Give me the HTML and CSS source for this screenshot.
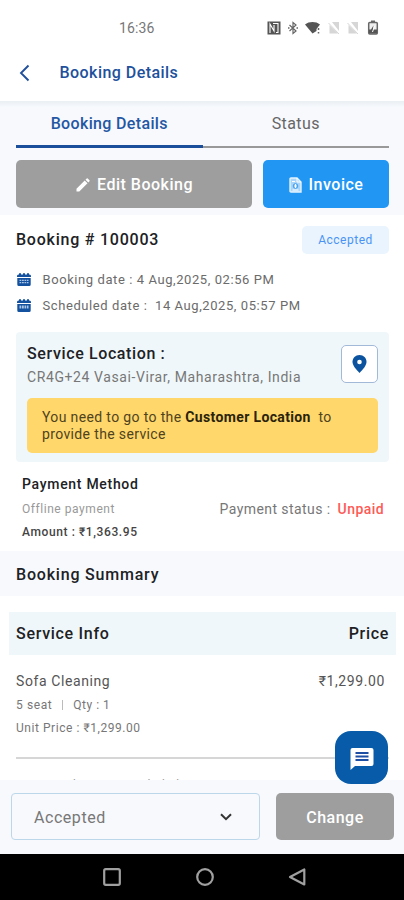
FILE: index.html
```html
<!DOCTYPE html>
<html lang="en">
<head>
<meta charset="utf-8">
<title>Booking Details</title>
<link rel="stylesheet" href="styles.css">
</head>
<body>
<div class="phone">
  <div class="statusbar">
    <span class="clock">16:36</span>
    <div class="sysicons">
      <svg width="14" height="14" viewBox="0 0 14 14"><rect x=".5" y=".5" width="13" height="13" fill="#555"/><path d="M3 12V3L7 10V4M6 2.500H11V11.500H9" fill="none" stroke="#fff" stroke-width="1.100"/></svg>
      <svg width="10" height="14" viewBox="0 0 10 14"><path d="M1.500 4L8 10 5 12.500V1.500L8 4 1.500 10" fill="none" stroke="#666" stroke-width="1.200"/><path d="M0 7h1.500M8.500 7H10" stroke="#666" stroke-width="1.300"/></svg>
      <svg width="16" height="14" viewBox="0 0 16 14"><path d="M0 3.500C4 .2 11 .2 15 3.500L11.500 8V10L7.500 12.500Z" fill="#555"/><path d="M13.500 7v2M13.500 11v1.500" stroke="#666" stroke-width="1.500"/></svg>
      <svg width="12" height="14" viewBox="0 0 12 14"><path d="M4 1H11V10ZM1.500 4V12.500H10Z" fill="#d6d6d6"/><path d="M.5 2L11 13" stroke="#d6d6d6"/></svg>
      <svg width="12" height="14" viewBox="0 0 12 14"><path d="M4 1H11V10ZM1.500 4V12.500H10Z" fill="#d6d6d6"/><path d="M.5 2L11 13" stroke="#d6d6d6"/></svg>
      <svg width="12" height="16" viewBox="0 0 12 16"><path d="M4 2V.5H8V2" fill="#666"/><rect x="1.700" y="2.500" width="8.600" height="11.500" rx="1" fill="#eee" stroke="#666" stroke-width="1.500"/><path d="M2 9.500H4L6.500 5.500 6 9.500H10V13.500H2Z" fill="#555"/><path d="M7.500 6L5.500 12" stroke="#fff"/></svg>
    </div>
  </div>
  <header class="appbar">
    <svg class="back" width="12" height="18" viewBox="0 0 12 18"><path d="M9.500 1.500L2 9l7.500 7.500" fill="none" stroke="#20509c" stroke-width="1.900"/></svg>
    <h1 class="title">Booking Details</h1>
  </header>
  <main class="content">
    <section class="top">
      <nav class="tabs">
        <span class="tab active">Booking Details</span>
        <span class="tab">Status</span>
      </nav>
      <div class="actions">
        <button class="btn gray edit">
          <svg width="14" height="14" viewBox="0 0 14 14"><path d="M.5 13.500V10.700L8.700 2.500 11.500 5.300 3.300 13.500ZM9.500 1.700L10.700.5Q11.200.1 11.700.5L13.500 2.300Q13.900 2.800 13.500 3.300L12.300 4.500Z" fill="#fff"/></svg>
          <span>Edit Booking</span>
        </button>
        <button class="btn blue">
          <svg width="13" height="16" viewBox="0 0 13 16"><path d="M2 1H8L12 5V15H2Q1 15 1 14V2Q1 1 2 1Z" fill="#a9d5fb" stroke="#e4f2ff" stroke-width="1.400"/><path d="M8 1V5H12M3 4.500H6M3.500 13H9.500" fill="none" stroke="#fff"/><circle cx="6.500" cy="9" r="2.300" fill="none" stroke="#3b9cf0"/><path d="M6.500 7V11" stroke="#fff"/></svg>
          <span>Invoice</span>
        </button>
      </div>
    </section>
    <section class="booking">
      <div class="bookhead"><h2 class="number">Booking # 100003</h2><span class="badge">Accepted</span></div>
      <div class="date">
        <svg width="14" height="13" viewBox="0 0 14 13"><path d="M0 3Q0 1.500 1.500 1.500H2V.2H4V1.500H6V.2H8V1.500H10V.2H12V1.500H12.500Q14 1.500 14 3V4H0ZM.3 5H13.700V11.500Q13.700 13 12.200 13H1.800Q.3 13 .3 11.500Z" fill="#14519f"/><path d="M2.500 7.300H11.500M2.500 9.700H11.500" stroke="#a9c5e8" stroke-width="1.300" stroke-dasharray="1.800 .7"/></svg>
        <span>Booking date : 4 Aug,2025, 02:56 PM</span>
      </div>
      <div class="date">
        <svg width="14" height="13" viewBox="0 0 14 13"><path d="M0 3Q0 1.500 1.500 1.500H2V.2H4V1.500H6V.2H8V1.500H10V.2H12V1.500H12.500Q14 1.500 14 3V4H0ZM.3 5H13.700V11.500Q13.700 13 12.200 13H1.800Q.3 13 .3 11.500Z" fill="#14519f"/><path d="M2.500 8H11.500" stroke="#a9c5e8" stroke-width="3" stroke-dasharray="1.800 .7"/></svg>
        <span>Scheduled date :&nbsp; 14 Aug,2025, 05:57 PM</span>
      </div>
    </section>
    <section class="location">
      <div class="locrow">
        <div><h3 class="loctitle">Service Location :</h3><p class="address">CR4G+24 Vasai-Virar, Maharashtra, India</p></div>
        <div class="pin"><svg width="15" height="18" viewBox="0 0 15 18"><path d="M7.500 0C3.400 0 .5 3 .5 6.800C.5 10.500 4 14.500 7.500 18C11 14.500 14.500 10.500 14.500 6.800C14.500 3 11.600 0 7.500 0Z" fill="#0c539f"/><circle cx="7.500" cy="7" r="2.300" fill="#fff"/></svg></div>
      </div>
      <p class="notice">You need to go to the <b>Customer Location</b>&nbsp; to<br>provide the service</p>
    </section>
    <section class="payment">
      <div>
        <h3 class="paytitle">Payment Method</h3>
        <p class="paytype">Offline payment</p>
        <p class="amount">Amount : ₹1,363.95</p>
      </div>
      <p class="paystat"><span>Payment status :</span><span class="unpaid">Unpaid</span></p>
    </section>
    <div class="summary"><h2>Booking Summary</h2></div>
    <div class="thead"><span>Service Info</span><span>Price</span></div>
    <div class="item">
      <div>
        <p>Sofa Cleaning</p>
        <p class="meta"><span>5 seat</span><i class="sep"></i><span class="qty">Qty : 1</span></p>
        <p class="unit">Unit Price : ₹1,299.00</p>
      </div>
      <span>₹1,299.00</span>
    </div>
    <p class="nextrow">Jet and Vacuum included</p>
  </main>
  <footer class="bottombar">
    <div class="select"><span>Accepted</span><svg width="12" height="8" viewBox="0 0 12 8"><path d="M1 1.200L6 6.200 11 1.200" fill="none" stroke="#333" stroke-width="2"/></svg></div>
    <button class="btn gray change">Change</button>
  </footer>
  <div class="sysnav">
    <svg width="18" height="18" viewBox="0 0 18 18"><rect x="1.200" y="1.200" width="15.600" height="15.600" rx="1.500"/></svg>
    <svg width="18" height="18" viewBox="0 0 18 18"><circle cx="9" cy="9" r="7.800"/></svg>
    <svg width="18" height="18" viewBox="0 0 18 18"><path d="M16.300 1.500V16.500L2 9Z"/></svg>
  </div>
  <div class="fab"><svg width="24" height="22" viewBox="0 0 24 22"><path d="M2.500 0H21.500Q23.500 0 23.500 2V16Q23.500 18 21.500 18H5L.5 22V2Q.5 0 2.500 0Z" fill="#fff"/><path d="M5.500 5H18.500M5.500 8.500H18.500M5.500 12H18.500" stroke="#1c4fa3" stroke-width="2"/></svg></div>
</div>
</body>
</html>
```
FILE: styles.css
```css
* { box-sizing: border-box; margin: 0; padding: 0; }
body { font-family: Roboto, "Liberation Sans", sans-serif; background: #fff; color: #202124; }
.phone { position: relative; width: 404px; height: 900px; display: flex; flex-direction: column; overflow: hidden; background: #fff; }
span, h1, h2, h3, p { white-space: nowrap; }
svg { flex: none; display: block; }
.statusbar { height: 50px; flex: none; display: flex; padding: 6px 25px 0 119px; align-items: center; justify-content: space-between; }
.clock { font-size: 14px; color: #777; letter-spacing: .1px; }
.sysicons { display: flex; align-items: center; gap: 7px; }
.sysicons svg:last-child { margin-left: 1px; }
.appbar { height: 51px; flex: none; display: flex; align-items: center; padding: 0 19px 6px; }
.title { font-size: 16px; line-height: 20px; font-weight: 500; color: #20509c; margin-left: 28.500px; letter-spacing: .45px; }
.content { flex: 1; min-height: 0; overflow: hidden; display: flex; flex-direction: column; }
.content > * { flex: none; }
.top { height: 114px; background: linear-gradient(#e9eff2, #f7f9fd 6px); padding: 0 15px 0 16px; }
.tabs { display: flex; height: 47px; }
.tab { flex: 1; text-align: center; font-size: 16px; line-height: 46px; letter-spacing: .4px; color: #666; border-bottom: 2px solid #999; }
.tab.active { color: #2457a3; border-bottom: 3px solid #1c4f9b; border-radius: 0 2px 0 0; font-weight: 500; letter-spacing: .35px; }
.actions { display: flex; gap: 11px; margin-top: 12px; height: 48px; }
.btn { border: 0; border-radius: 5px; display: flex; align-items: center; justify-content: center; gap: 7px; color: #fff; font: 500 16px/20px Roboto, sans-serif; letter-spacing: .5px; padding-top: 2px; }
.gray { background: #9e9e9e; }
.blue { background: #2196f3; width: 126px; }
.edit { flex: 1; padding-left: 1px; }
.booking { padding: 11px 15px 0 16px; height: 117px; }
.bookhead { display: flex; height: 28px; justify-content: space-between; align-items: center; margin-bottom: 13px; }
.number { font-size: 16px; line-height: 20px; font-weight: 500; letter-spacing: .77px; margin-bottom: 1px; }
.badge { width: 87px; height: 28px; line-height: 28px; border-radius: 5px; background: #e9f4fe; text-align: center; color: #4a93f5; font-size: 12px; letter-spacing: .5px; }
.date { display: flex; height: 25.500px; align-items: center; gap: 11.500px; padding-left: 1px; font-size: 13px; letter-spacing: .58px; color: #6b6b6b; }
.location { margin: 0 15px 0 16px; height: 130px; background: #f0f7fa; border-radius: 4px; padding: 13px 11px 0; }
.locrow { display: flex; justify-content: space-between; height: 53px; }
.loctitle { font-size: 16px; line-height: 20px; font-weight: 500; letter-spacing: .62px; margin-top: -1px; }
.address { font-size: 14px; line-height: 20px; margin-top: 3px; color: #777; letter-spacing: .6px; }
.pin { width: 37px; height: 38px; border: 1px solid #a3b9d8; border-radius: 5px; background: #fff; display: flex; align-items: center; justify-content: center; }
.notice { height: 55px; border-radius: 5px; background: #ffd76a; padding: 11px 15px; font-size: 14px; line-height: 17px; color: #4f431f; letter-spacing: .36px; }
.notice b { font-weight: 700; color: #2a230c; }
.payment { display: flex; justify-content: space-between; padding: 12px 20px 0 22px; height: 89px; }
.paytitle { font-size: 14px; line-height: 20px; font-weight: 500; letter-spacing: .7px; }
.paytype { font-size: 12px; line-height: 20px; margin-top: 5px; color: #999; letter-spacing: .55px; }
.amount { font-size: 12px; line-height: 20px; margin-top: 3px; font-weight: 500; color: #444; letter-spacing: .6px; }
.paystat { display: flex; gap: 7px; font-size: 14px; line-height: 20px; margin-top: 25px; color: #777; letter-spacing: .43px; }
.unpaid { color: #ff5a55; font-weight: 500; }
.summary { height: 45px; background: #f7f9fd; padding: 2px 16px 0; display: flex; align-items: center; }
.summary h2 { font-size: 16px; line-height: 20px; font-weight: 500; letter-spacing: .8px; }
.thead { margin: 16px 8px 0 9px; height: 43px; padding: 0 7px; background: #f0f7fa; display: flex; justify-content: space-between; align-items: center; font-size: 16px; font-weight: 500; letter-spacing: .7px; }
.item { margin: 0 15px 0 16px; height: 104px; border-bottom: 2px solid #d6d6d6; display: flex; justify-content: space-between; padding: 16px 4px 0 0; font-size: 14px; line-height: 20px; letter-spacing: .6px; color: #555; }
.meta { display: flex; align-items: center; height: 20px; margin-top: 4px; font-size: 12px; color: #777; }
.sep { width: 1px; height: 10px; background: #bbb; margin: 0 10px; }
.qty { letter-spacing: .5px; }
.unit { font-size: 12px; letter-spacing: .55px; color: #777; margin-top: 3px; }
.nextrow { font-size: 12px; line-height: 14px; letter-spacing: .5px; padding: 19px 0 0 33px; color: #999; }
.bottombar { height: 74px; flex: none; background: #f7f9fd; display: flex; padding: 13px 10px 14px 11px; gap: 16px; }
.select { flex: 1; border: 1px solid #bdd7ea; border-radius: 4px; display: flex; align-items: center; justify-content: space-between; padding: 1px 27px 0 22px; font-size: 16px; letter-spacing: .55px; color: #777; }
.change { width: 118px; }
.sysnav { height: 46px; flex: none; background: #000; display: flex; align-items: center; justify-content: center; gap: 74.500px; padding-left: 5px; }
.sysnav svg { fill: none; stroke: #a0a0a0; stroke-width: 2.200; stroke-linejoin: round; }
.fab { position: absolute; left: 335px; top: 731px; width: 53px; height: 53px; border-radius: 16px; background: #085ba8; display: flex; align-items: center; justify-content: center; padding-top: 2px; }
```
